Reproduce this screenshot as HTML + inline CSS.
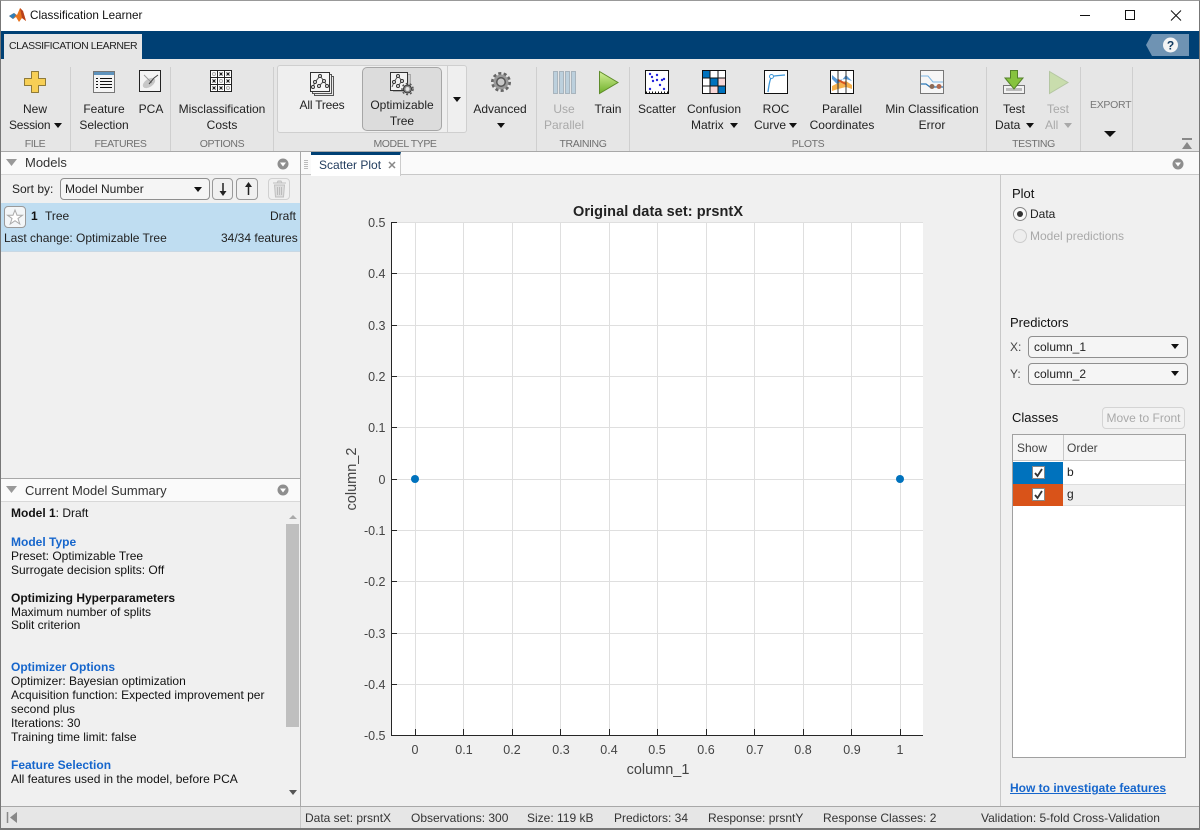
<!DOCTYPE html>
<html><head><meta charset="utf-8"><style>
html,body{margin:0;padding:0;width:1200px;height:830px;overflow:hidden;background:#f0f0f0}
body{position:relative;font:12px/16px "Liberation Sans",sans-serif;color:#222}
.t,.c{position:absolute;white-space:nowrap}
.c{text-align:center}
.g{color:#a9a9a9}
.s{color:#707070;line-height:14px;font-size:10.500px;letter-spacing:-.4px}
.b{position:absolute;box-sizing:border-box}
.sep{position:absolute;top:67px;height:84px;width:1px;background:#cfcfcf}
.k{position:absolute;width:0;height:0;border-left:4.5px solid transparent;border-right:4.5px solid transparent;border-top:5px solid #111}
svg{position:absolute;overflow:visible}
.m{line-height:14px;color:#111}
.bl{color:#1666cc;font-weight:bold}
.st{color:#333;top:810px}
.h{font-size:13px;color:#111}
</style></head><body>
<!-- title bar -->
<div class="b" style="left:0;top:0;width:1200px;height:31px;background:#fff"></div>
<svg style="left:9px;top:7px" width="18" height="16" viewBox="0 0 18 16"><path d="M0 9L5 6L8 8L11 1L14 4L17 14L13 11L10 15L7 10L4 12Z" fill="#e8731c"/><path d="M0 9L5 6L7 8L4 12Z" fill="#2f7fb8"/><path d="M11 1L14 4L17 14L13 11Z" fill="#b8401a"/></svg>
<div class="t" style="left:30px;top:8px;color:#111;font-size:11.700px">Classification Learner</div>
<svg style="left:1080px;top:8px" width="110" height="16" viewBox="0 0 110 16" fill="none" stroke="#111" stroke-width="1"><path d="M0 7.500H10"/><rect x="45.500" y="2.500" width="9" height="9"/><path d="M91 2.500L101 12.500M101 2.500L91 12.500"/></svg>
<!-- blue band -->
<div class="b" style="left:0;top:31px;width:1200px;height:28px;background:#004074"></div>
<div class="b" style="left:4px;top:34px;width:138px;height:25px;background:#e6e6e6"></div>
<div class="t" style="left:9px;top:38px;color:#222;font-size:10.500px;letter-spacing:-.45px">CLASSIFICATION LEARNER</div>
<svg style="left:1146px;top:34px" width="44" height="22" viewBox="0 0 44 22"><path d="M0 11L6 0H43V22H6Z" fill="#6f93b3"/><circle cx="24.500" cy="11" r="7.500" fill="#f4f4f4"/><text x="24.500" y="15.500" text-anchor="middle" font-family="Liberation Sans" font-size="12" font-weight="bold" fill="#103a60">?</text></svg>
<!-- ribbon -->
<div class="b" style="left:0;top:59px;width:1200px;height:93px;background:#e6e6e6;border-bottom:1px solid #a8a8a8"></div>
<div class="sep" style="left:70px"></div><div class="sep" style="left:170px"></div><div class="sep" style="left:273px"></div><div class="sep" style="left:536px"></div><div class="sep" style="left:629px"></div><div class="sep" style="left:986px"></div><div class="sep" style="left:1080px"></div><div class="sep" style="left:1132px"></div>
<!-- gallery -->
<div class="b" style="left:277px;top:65px;width:190px;height:68px;background:#efefef;border:1px solid #cfcfcf;border-radius:3px"></div>
<div class="b" style="left:447px;top:65px;width:1px;height:68px;background:#cfcfcf"></div>
<div class="b" style="left:362px;top:67px;width:80px;height:64px;background:#dcdcdc;border:1px solid #a6a6a6;border-radius:5px"></div>
<!-- ribbon icons -->
<svg style="left:24px;top:71px" width="22" height="22" viewBox="0 0 22 22"><path d="M7.500.5H14.500V7.500H21.500V14.500H14.500V21.500H7.500V14.500H.5V7.500H7.500Z" fill="#f7cf55" stroke="#8f7a38" stroke-linejoin="round"/></svg>
<svg style="left:93px;top:71px" width="22" height="22" viewBox="0 0 22 22"><rect x=".5" y=".5" width="21" height="21" fill="#f4f4f4" stroke="#777"/><rect x="1" y="1" width="20" height="3" fill="#5e93bd"/><path d="M3 7.500H5M7 7.500H19M3 10.500H5M7 10.500H19M3 13.500H5M7 13.500H19M3 16.500H5M7 16.500H19" stroke="#111"/></svg>
<svg style="left:139px;top:70px" width="22" height="22" viewBox="0 0 22 22"><rect x=".5" y=".5" width="21" height="21" fill="#f3f3f3" stroke="#222"/><ellipse cx="10" cy="13" rx="7" ry="4" fill="#aaa" opacity=".6" transform="rotate(-35 10 13)"/><path d="M5 5L13 13" stroke="#999"/><path d="M10 14L15 8L19 5" stroke="#444" fill="none"/></svg>
<svg style="left:210px;top:70px" width="22" height="22" viewBox="0 0 22 22"><rect x=".5" y=".5" width="21" height="21" fill="#fff" stroke="#222"/><path d="M7.500 1V21M14.500 1V21M1 7.500H21M1 14.500H21" stroke="#222"/><g fill="none" stroke="#111"><path d="M9.500 2.500L12.500 5.500M12.500 2.500L9.500 5.500M16.500 2.500L19.500 5.500M19.500 2.500L16.500 5.500M2.500 9.500L5.500 12.500M5.500 9.500L2.500 12.500M16.500 9.500L19.500 12.500M19.500 9.500L16.500 12.500M2.500 16.500L5.500 19.500M5.500 16.500L2.500 19.500M9.500 16.500L12.500 19.500M12.500 16.500L9.500 19.500"/></g><g fill="none" stroke="#aaa"><circle cx="4" cy="4" r="1.500"/><circle cx="11" cy="11" r="1.500"/><circle cx="18" cy="18" r="1.500"/></g></svg>
<svg style="left:310px;top:72px" width="25" height="25" viewBox="0 0 25 25"><rect x="4.500" y="4.500" width="19" height="19" fill="#e8e8e8" stroke="#555"/><rect x="2.500" y="2.500" width="19" height="19" fill="#eee" stroke="#555"/><rect x=".5" y=".5" width="19" height="19" fill="#f6f6f6" stroke="#333"/><path d="M10 4L5 10L3 15M10 4L14 9L9 14M14 9L17 14" stroke="#555" fill="none"/><g fill="#f6f6f6" stroke="#333"><circle cx="10" cy="4" r="1.500"/><circle cx="5" cy="10" r="1.500"/><circle cx="14" cy="9" r="1.500"/><circle cx="9" cy="14" r="1.500"/><circle cx="17" cy="14" r="1.500"/><circle cx="3" cy="15" r="1.500"/></g></svg>
<svg style="left:390px;top:72px" width="25" height="25" viewBox="0 0 25 25"><rect x="3.500" y="2.500" width="17" height="17" fill="#ccc" stroke="#aaa"/><rect x=".5" y=".5" width="17" height="18" fill="#f2f2f2" stroke="#333"/><path d="M8 4L4 10L2 15M8 4L12 9L8 14" stroke="#555" fill="none"/><g fill="#f2f2f2" stroke="#333"><circle cx="8" cy="4" r="1.500"/><circle cx="4" cy="10" r="1.500"/><circle cx="12" cy="9" r="1.500"/><circle cx="8" cy="14" r="1.500"/></g><circle cx="17.500" cy="17" r="5.500" fill="none" stroke="#555" stroke-width="1.500" stroke-dasharray="2 2"/><circle cx="17.500" cy="17" r="4" fill="#888" stroke="#333"/><circle cx="17.500" cy="17" r="2" fill="#e4e4e4"/></svg>
<svg style="left:491px;top:72px" width="20" height="20" viewBox="0 0 20 20"><circle cx="10" cy="10" r="8.500" fill="none" stroke="#666" stroke-width="3" stroke-dasharray="3 2.300"/><circle cx="10" cy="10" r="7.500" fill="#999"/><circle cx="10" cy="10" r="5" fill="#555"/><circle cx="10" cy="10" r="3.500" fill="#c8c8c8"/></svg>
<svg style="left:553px;top:71px" width="23" height="23" viewBox="0 0 23 23"><g fill="#bcd0dd" stroke="#a8b4bd"><rect x=".5" y=".5" width="4" height="22"/><rect x="6.500" y=".5" width="4" height="22"/><rect x="12.500" y=".5" width="4" height="22"/><rect x="18.500" y=".5" width="4" height="22"/></g></svg>
<svg style="left:599px;top:71px" width="20" height="23" viewBox="0 0 20 23"><defs><linearGradient id="gr" x1="0" y1="0" x2="0" y2="1"><stop offset="0" stop-color="#d4f098"/><stop offset="1" stop-color="#6fb02a"/></linearGradient></defs><path d="M.5.500L19 11.500L.5 22.500Z" fill="url(#gr)" stroke="#5e8c2a"/></svg>
<svg style="left:645px;top:70px" width="24" height="24" viewBox="0 0 24 24"><rect x=".5" y=".5" width="23" height="23" fill="#fff" stroke="#111"/><path d="M1 22.500H23" stroke="#111" stroke-dasharray="1 2" stroke-width="2"/><g fill="#2222dd"><circle cx="5" cy="4" r="1.200"/><circle cx="12" cy="5" r="1.200"/><circle cx="7" cy="7" r="1.200"/><circle cx="12" cy="10" r="1.200"/><circle cx="19" cy="9" r="1.200"/><circle cx="17" cy="10" r="1.200"/><circle cx="8" cy="11" r="1.200"/><circle cx="15" cy="15" r="1.200"/><circle cx="5" cy="19" r="1.200"/><circle cx="19" cy="19" r="1.200"/></g></svg>
<svg style="left:702px;top:70px" width="24" height="24" viewBox="0 0 24 24"><rect width="24" height="24" fill="#fff"/><rect x="1" y="1" width="7.500" height="7.500" fill="#0072bd"/><rect x="8.500" y="8.500" width="7" height="7" fill="#0072bd"/><rect x="15.500" y="15.500" width="7.500" height="7.500" fill="#0072bd"/><rect x="15.500" y="8.500" width="7.500" height="7" fill="#f8d8d8"/><rect x="8.500" y="15.500" width="7" height="7.500" fill="#f8d8d8"/><path d="M.5.500H23.500V23.500H.5ZM8 1V23M16 1V23M1 8H23M1 16H23" fill="none" stroke="#111"/></svg>
<svg style="left:764px;top:70px" width="24" height="24" viewBox="0 0 24 24"><rect x=".5" y=".5" width="23" height="23" fill="#fff" stroke="#111"/><path d="M4 22C5 14 6 8 8 6.500C11 5.500 16 5.500 21 5" fill="none" stroke="#3f97d8" stroke-width="1.300"/><circle cx="7.500" cy="6.500" r="2" fill="#fff" stroke="#3f97d8"/></svg>
<svg style="left:830px;top:70px" width="24" height="24" viewBox="0 0 24 24"><rect x=".5" y=".5" width="23" height="23" fill="#fff" stroke="#111"/><path d="M2 9L8 15L16 5L22 11L16 9L8 10L2 5Z" fill="#5a9bd8"/><path d="M2 16L8 13L16 11L22 15V19L16 17L8 19L2 21Z" fill="#f5b04c"/><path d="M8 10L16 14" stroke="#d9541e" stroke-width="2"/><path d="M8 1V23M16 1V23" stroke="#333"/></svg>
<svg style="left:920px;top:70px" width="24" height="24" viewBox="0 0 24 24"><rect x=".5" y=".5" width="23" height="23" fill="#f6f6f6" stroke="#777"/><path d="M1 6H8L13 12H23" fill="none" stroke="#7cb6e4"/><path d="M1 14H6L10 17H23" fill="none" stroke="#2a78b8" stroke-width="1.200"/><circle cx="12" cy="16.500" r="2.500" fill="#8c6a56"/><circle cx="19" cy="16.500" r="2.500" fill="#b06a50"/></svg>
<svg style="left:1003px;top:70px" width="22" height="24" viewBox="0 0 22 24"><path d="M.5 15.500H21.500V23.500H.5Z" fill="#f2f2f2" stroke="#777"/><path d="M3 18H19V21H3Z" fill="#bbb"/><path d="M7.500.5H14.500V8H20L11 19L2 8H7.500Z" fill="#86c33e" stroke="#55832a"/></svg>
<svg style="left:1049px;top:71px" width="20" height="23" viewBox="0 0 20 23" opacity=".45"><path d="M.5.500L19 11.500L.5 22.500Z" fill="#a6d36a" stroke="#79a050"/></svg>
<!-- ribbon labels -->
<div class="c" style="left:0;top:101px;width:70px">New</div><div class="t" style="left:9px;top:117px;letter-spacing:-.2px">Session</div><div class="k" style="left:54px;top:123px"></div>
<div class="c" style="left:74px;top:101px;width:60px">Feature</div><div class="c" style="left:74px;top:117px;width:60px">Selection</div>
<div class="c" style="left:131px;top:101px;width:40px">PCA</div>
<div class="c" style="left:172px;top:101px;width:100px">Misclassification</div><div class="c" style="left:172px;top:117px;width:100px">Costs</div>
<div class="c" style="left:292px;top:97px;width:60px;letter-spacing:-.2px">All Trees</div>
<div class="c" style="left:362px;top:97px;width:80px">Optimizable</div><div class="c" style="left:362px;top:113px;width:80px">Tree</div>
<div class="k" style="left:453px;top:97px"></div>
<div class="c" style="left:470px;top:101px;width:60px">Advanced</div><div class="k" style="left:497px;top:123px"></div>
<div class="c g" style="left:534px;top:101px;width:60px">Use</div><div class="c g" style="left:534px;top:117px;width:60px">Parallel</div>
<div class="c" style="left:588px;top:101px;width:40px">Train</div>
<div class="c" style="left:632px;top:101px;width:50px">Scatter</div>
<div class="c" style="left:684px;top:101px;width:60px">Confusion</div><div class="t" style="left:691px;top:117px">Matrix</div><div class="k" style="left:730px;top:123px"></div>
<div class="c" style="left:746px;top:101px;width:60px">ROC</div><div class="t" style="left:754px;top:117px">Curve</div><div class="k" style="left:789px;top:123px"></div>
<div class="c" style="left:812px;top:101px;width:60px">Parallel</div><div class="c" style="left:802px;top:117px;width:80px">Coordinates</div>
<div class="c" style="left:872px;top:101px;width:120px">Min Classification</div><div class="c" style="left:902px;top:117px;width:60px">Error</div>
<div class="c" style="left:994px;top:101px;width:40px">Test</div><div class="t" style="left:995px;top:117px">Data</div><div class="k" style="left:1026px;top:123px"></div>
<div class="c g" style="left:1038px;top:101px;width:40px">Test</div><div class="t g" style="left:1045px;top:117px">All</div><div class="k" style="left:1064px;top:123px;border-top-color:#a9a9a9"></div>
<div class="t" style="left:1090px;top:97px;color:#777;font-size:10.500px;letter-spacing:-.3px">EXPORT</div><div class="k" style="left:1104px;top:131px;border-left-width:6px;border-right-width:6px;border-top-width:6px"></div>
<svg style="left:1181px;top:138px" width="12" height="12" viewBox="0 0 12 12"><path d="M1 1H11" stroke="#888" stroke-width="2"/><path d="M6 4L11 11H1Z" fill="#888"/></svg>
<div class="c s" style="left:0;top:137px;width:70px">FILE</div><div class="c s" style="left:71px;top:137px;width:99px">FEATURES</div><div class="c s" style="left:171px;top:137px;width:102px">OPTIONS</div><div class="c s" style="left:274px;top:137px;width:262px">MODEL TYPE</div><div class="c s" style="left:537px;top:137px;width:92px">TRAINING</div><div class="c s" style="left:630px;top:137px;width:356px">PLOTS</div><div class="c s" style="left:987px;top:137px;width:93px">TESTING</div>
<!-- left panel -->
<div class="b" style="left:0;top:152px;width:301px;height:655px;background:#f0f0f0;border-right:1px solid #a8a8a8"></div>
<div class="b" style="left:1px;top:152px;width:299px;height:23px;background:#fafafa;border-bottom:1px solid #d8d8d8"></div>
<svg style="left:6px;top:159px" width="11" height="7"><path d="M0 0H11L5.500 7Z" fill="#999"/></svg>
<div class="t" style="left:25px;top:155px;font-size:13px;color:#333">Models</div>
<svg style="left:277px;top:158px" width="12" height="12" viewBox="0 0 12 12"><circle cx="6" cy="6" r="5.500" fill="#8e8e8e"/><path d="M3 4.500H9L6 8.500Z" fill="#fff"/></svg>
<div class="t" style="left:12px;top:181px">Sort by:</div>
<div class="b" style="left:60px;top:178px;width:150px;height:22px;background:#f5f5f5;border:1px solid #8f8f8f;border-radius:4px"></div>
<div class="t" style="left:65px;top:181px">Model Number</div><div class="k" style="left:194px;top:187px"></div>
<div class="b" style="left:212px;top:178px;width:21px;height:22px;background:#f0f0f0;border:1px solid #999;border-radius:4px"></div>
<div class="b" style="left:236px;top:178px;width:22px;height:22px;background:#f0f0f0;border:1px solid #999;border-radius:4px"></div>
<svg style="left:212px;top:178px" width="46" height="22" viewBox="0 0 46 22"><path d="M11 5V15M36.500 7V17" stroke="#222" stroke-width="1.500"/><path d="M7.500 13H14.500L11 18ZM33 9H40L36.500 4Z" fill="#222"/></svg>
<div class="b" style="left:268px;top:178px;width:22px;height:22px;border:1px solid #d0d0d0;border-radius:4px"></div>
<svg style="left:272px;top:180px" width="15" height="18" viewBox="0 0 15 18"><path d="M1 3H14M5 3L6 1H9L10 3M2.500 5H12.500L11.500 17H3.500Z" fill="#ddd" stroke="#c0c0c0"/><path d="M5.500 7V15M7.500 7V15M9.500 7V15" stroke="#bbb"/></svg>
<div class="b" style="left:1px;top:203px;width:299px;height:49px;background:#bfddf1;border-bottom:1px solid #c8d8e4"></div>
<div class="b" style="left:4px;top:206px;width:22px;height:22px;background:#f3f6f8;border:1px solid #9a9a9a;border-radius:4px"></div>
<svg style="left:6px;top:208px" width="18" height="18" viewBox="0 0 18 18"><path d="M9 2L11 7.200H16.500L12 10.500L13.800 16L9 12.700L4.200 16L6 10.500L1.500 7.200H7Z" fill="#fff" stroke="#aaa"/></svg>
<div class="t" style="left:31px;top:208px;font-weight:bold;color:#111">1</div><div class="t" style="left:45px;top:208px">Tree</div><div class="t" style="left:270px;top:208px">Draft</div>
<div class="t" style="left:4px;top:230px">Last change: Optimizable Tree</div><div class="t" style="left:221px;top:230px">34/34 features</div>
<div class="b" style="left:0;top:478px;width:301px;height:1px;background:#a8a8a8"></div>
<div class="b" style="left:1px;top:479px;width:299px;height:23px;background:#fafafa;border-bottom:1px solid #d8d8d8"></div>
<svg style="left:6px;top:486px" width="11" height="7"><path d="M0 0H11L5.500 7Z" fill="#999"/></svg>
<div class="t" style="left:25px;top:483px;font-size:13px;color:#333">Current Model Summary</div>
<svg style="left:277px;top:484px" width="12" height="12" viewBox="0 0 12 12"><circle cx="6" cy="6" r="5.500" fill="#8e8e8e"/><path d="M3 4.500H9L6 8.500Z" fill="#fff"/></svg>
<div class="t m" style="left:11px;top:506px"><b>Model 1</b>: Draft</div>
<div class="t m bl" style="left:11px;top:535px">Model Type</div>
<div class="t m" style="left:11px;top:549px">Preset: Optimizable Tree</div>
<div class="t m" style="left:11px;top:563px">Surrogate decision splits: Off</div>
<div class="t m" style="left:11px;top:591px"><b>Optimizing Hyperparameters</b></div>
<div class="t m" style="left:11px;top:605px">Maximum number of splits</div>
<div class="t m" style="left:11px;top:618px;height:11px;overflow:hidden">Split criterion</div>
<div class="t m bl" style="left:11px;top:660px">Optimizer Options</div>
<div class="t m" style="left:11px;top:674px">Optimizer: Bayesian optimization</div>
<div class="t m" style="left:11px;top:688px">Acquisition function: Expected improvement per</div>
<div class="t m" style="left:11px;top:702px">second plus</div>
<div class="t m" style="left:11px;top:716px">Iterations: 30</div>
<div class="t m" style="left:11px;top:730px">Training time limit: false</div>
<div class="t m bl" style="left:11px;top:758px">Feature Selection</div>
<div class="t m" style="left:11px;top:772px">All features used in the model, before PCA</div>
<div class="b" style="left:286px;top:524px;width:13px;height:203px;background:#bfbfbf"></div>
<svg style="left:288px;top:513px" width="10" height="284"><path d="M1 6H9L5 2Z" fill="#aaa"/><path d="M1 277H9L5 282Z" fill="#555"/></svg>
<!-- status bar -->
<div class="b" style="left:0;top:806px;width:1200px;height:1px;background:#a8a8a8"></div>
<div class="b" style="left:0;top:807px;width:1200px;height:21px;background:#e6e6e6"></div>
<div class="b" style="left:0;top:828px;width:1200px;height:2px;background:#777"></div>
<div class="b" style="left:300px;top:807px;width:1px;height:21px;background:#c8c8c8"></div>
<svg style="left:7px;top:812px" width="11" height="11"><path d="M.5 0V11" stroke="#888" stroke-width="1.500"/><path d="M10 0V11L3 5.500Z" fill="#888"/></svg>
<div class="t st" style="left:305px">Data set: prsntX</div><div class="t st" style="left:411px">Observations: 300</div><div class="t st" style="left:527px">Size: 119 kB</div><div class="t st" style="left:614px">Predictors: 34</div><div class="t st" style="left:708px">Response: prsntY</div><div class="t st" style="left:823px">Response Classes: 2</div><div class="t st" style="left:981px">Validation: 5-fold Cross-Validation</div>
<!-- tab bar -->
<div class="b" style="left:301px;top:152px;width:899px;height:23px;background:#fafafa;border-bottom:1px solid #c8c8c8"></div>
<svg style="left:304px;top:160px" width="4" height="9"><path d="M0 .5H4M0 2.500H4M0 4.500H4M0 6.500H4M0 8.500H4" stroke="#bbb"/></svg>
<div class="b" style="left:311px;top:152px;width:90px;height:24px;background:#fff;border-right:1px solid #ccc;border-top:3px solid #004074"></div>
<div class="t" style="left:319px;top:157px;color:#1f3a5c">Scatter Plot</div>
<svg style="left:388px;top:161px" width="8" height="8"><path d="M1 1L7 7M7 1L1 7" stroke="#888" stroke-width="1.500"/></svg>
<svg style="left:1172px;top:158px" width="12" height="12" viewBox="0 0 12 12"><circle cx="6" cy="6" r="5.500" fill="#8e8e8e"/><path d="M3 4.500H9L6 8.500Z" fill="#fff"/></svg>
<!-- plot -->
<svg style="left:0;top:0" width="1200" height="830" font-family="Liberation Sans" font-size="12.500" fill="#444">
<rect x="391" y="222" width="532" height="513" fill="#fff"/>
<g stroke="#dfdfdf" stroke-width="1"><path d="M415.500 222V735M463.500 222V735M512.500 222V735M560.500 222V735M609.500 222V735M657.500 222V735M706.500 222V735M754.500 222V735M803.500 222V735M851.500 222V735M900.500 222V735M391 222.500H923M391 273.500H923M391 325.500H923M391 376.500H923M391 427.500H923M391 479.500H923M391 530.500H923M391 581.500H923M391 633.500H923M391 684.500H923"/></g>
<path d="M391.500 222V735.500H923" fill="none" stroke="#262626"/>
<path d="M391 222.500H397M391 273.500H397M391 325.500H397M391 376.500H397M391 427.500H397M391 479.500H397M391 530.500H397M391 581.500H397M391 633.500H397M391 684.500H397M415.500 735V729M463.500 735V729M512.500 735V729M560.500 735V729M609.500 735V729M657.500 735V729M706.500 735V729M754.500 735V729M803.500 735V729M851.500 735V729M900.500 735V729" stroke="#262626" fill="none"/>
<g text-anchor="end"><text x="385.500" y="227">0.5</text><text x="385.500" y="278">0.4</text><text x="385.500" y="330">0.3</text><text x="385.500" y="381">0.2</text><text x="385.500" y="432">0.1</text><text x="385.500" y="484">0</text><text x="385.500" y="535">-0.1</text><text x="385.500" y="586">-0.2</text><text x="385.500" y="638">-0.3</text><text x="385.500" y="689">-0.4</text><text x="385.500" y="740">-0.5</text></g>
<g text-anchor="middle"><text x="415" y="754">0</text><text x="464" y="754">0.1</text><text x="512" y="754">0.2</text><text x="561" y="754">0.3</text><text x="609" y="754">0.4</text><text x="657" y="754">0.5</text><text x="706" y="754">0.6</text><text x="755" y="754">0.7</text><text x="803" y="754">0.8</text><text x="852" y="754">0.9</text><text x="900" y="754">1</text>
<text x="658" y="774" font-size="14.500">column_1</text>
<text x="658" y="216" font-size="14.500" font-weight="bold" fill="#222" textLength="170">Original data set: prsntX</text>
<text transform="translate(356 479) rotate(-90)" font-size="14.500">column_2</text></g>
<circle cx="415" cy="479" r="4" fill="#0072bd"/><circle cx="900" cy="479" r="4" fill="#0072bd"/>
</svg>
<!-- right panel -->
<div class="b" style="left:1000px;top:175px;width:200px;height:631px;background:#f0f0f0;border-left:1px solid #c8c8c8"></div>
<div class="t h" style="left:1012px;top:186px">Plot</div>
<div class="b" style="left:1013px;top:207px;width:14px;height:14px;border-radius:50%;background:#fafafa;border:1px solid #888"></div><div class="b" style="left:1017px;top:211px;width:6px;height:6px;border-radius:50%;background:#333"></div>
<div class="t" style="left:1030px;top:206px">Data</div>
<div class="b" style="left:1013px;top:229px;width:14px;height:14px;border-radius:50%;background:#eee;border:1px solid #ccc"></div>
<div class="t g" style="left:1030px;top:228px">Model predictions</div>
<div class="t h" style="left:1010px;top:315px">Predictors</div>
<div class="t" style="left:1010px;top:339px;color:#444">X:</div><div class="t" style="left:1010px;top:366px;color:#444">Y:</div>
<div class="b" style="left:1028px;top:336px;width:160px;height:22px;background:#f5f5f5;border:1px solid #8f8f8f;border-radius:4px"></div>
<div class="b" style="left:1028px;top:363px;width:160px;height:22px;background:#f5f5f5;border:1px solid #8f8f8f;border-radius:4px"></div>
<div class="t" style="left:1034px;top:339px">column_1</div><div class="t" style="left:1034px;top:366px">column_2</div>
<div class="k" style="left:1171px;top:344px"></div><div class="k" style="left:1171px;top:371px"></div>
<div class="t h" style="left:1012px;top:410px">Classes</div>
<div class="b" style="left:1102px;top:407px;width:83px;height:22px;background:#f2f2f2;border:1px solid #d4d4d4;border-radius:4px"></div>
<div class="c g" style="left:1102px;top:410px;width:83px">Move to Front</div>
<div class="b" style="left:1012px;top:434px;width:174px;height:324px;background:#fff;border:1px solid #a0a0a0"></div>
<div class="b" style="left:1013px;top:435px;width:172px;height:26px;background:#f5f5f5;border-bottom:1px solid #c8c8c8"></div>
<div class="b" style="left:1063px;top:435px;width:1px;height:26px;background:#c8c8c8"></div>
<div class="t" style="left:1017px;top:440px;color:#444">Show</div><div class="t" style="left:1067px;top:440px;color:#444">Order</div>
<div class="b" style="left:1013px;top:462px;width:50px;height:22px;background:#0072bd"></div>
<div class="b" style="left:1013px;top:484px;width:50px;height:22px;background:#d95319"></div>
<div class="b" style="left:1063px;top:484px;width:122px;height:22px;background:#f0f0f0;border-top:1px solid #ddd;border-bottom:1px solid #ddd"></div>
<div class="b" style="left:1032px;top:466px;width:13px;height:13px;background:#fff;border:1px solid #888"></div>
<div class="b" style="left:1032px;top:488px;width:13px;height:13px;background:#fff;border:1px solid #888"></div>
<svg style="left:1032px;top:466px" width="13" height="35"><path d="M3 7L5.500 10L10 3M3 29L5.500 32L10 25" fill="none" stroke="#333" stroke-width="1.800"/></svg>
<div class="t" style="left:1067px;top:464px">b</div><div class="t" style="left:1067px;top:486px">g</div>
<div class="t" style="left:1010px;top:780px;color:#1666cc;font-weight:bold;text-decoration:underline">How to investigate features</div>
<!-- window border -->
<div class="b" style="left:0;top:0;width:1200px;height:830px;border:1px solid #777;border-top-color:#999;border-bottom:0;pointer-events:none"></div>
</body></html>
